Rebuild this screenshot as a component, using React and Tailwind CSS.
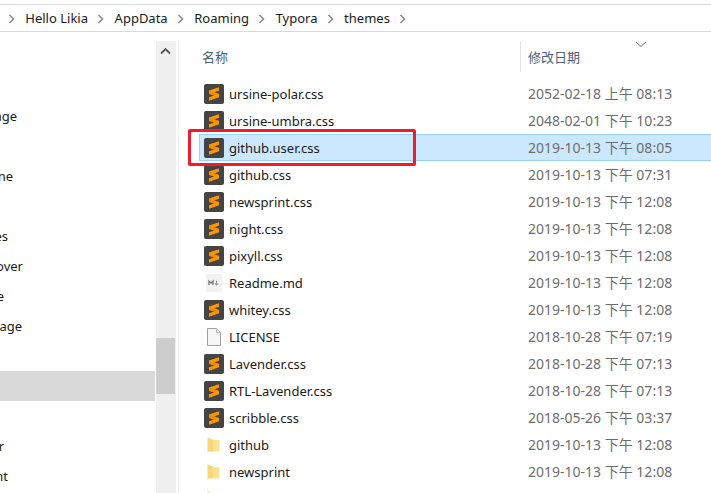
const FONT = "font-['Noto_Sans','Noto_Sans_CJK_SC',sans-serif]"

const files = [
  { name: 'ursine-polar.css', date: '2052-02-18 上午 08:13', icon: 'sublime' },
  { name: 'ursine-umbra.css', date: '2048-02-01 下午 10:23', icon: 'sublime' },
  { name: 'github.user.css', date: '2019-10-13 下午 08:05', icon: 'sublime', selected: true },
  { name: 'github.css', date: '2019-10-13 下午 07:31', icon: 'sublime' },
  { name: 'newsprint.css', date: '2019-10-13 下午 12:08', icon: 'sublime' },
  { name: 'night.css', date: '2019-10-13 下午 12:08', icon: 'sublime' },
  { name: 'pixyll.css', date: '2019-10-13 下午 12:08', icon: 'sublime' },
  { name: 'Readme.md', date: '2019-10-13 下午 12:08', icon: 'md' },
  { name: 'whitey.css', date: '2019-10-13 下午 12:08', icon: 'sublime' },
  { name: 'LICENSE', date: '2018-10-28 下午 07:19', icon: 'file' },
  { name: 'Lavender.css', date: '2018-10-28 下午 07:13', icon: 'sublime' },
  { name: 'RTL-Lavender.css', date: '2018-10-28 下午 07:13', icon: 'sublime' },
  { name: 'scribble.css', date: '2018-05-26 下午 03:37', icon: 'sublime' },
  { name: 'github', date: '2019-10-13 下午 12:08', icon: 'folder' },
  { name: 'newsprint', date: '2019-10-13 下午 12:08', icon: 'folder' },
  { name: '', date: '', icon: 'folder' },
]

// labels are cut off by the left edge of the crop, so they sit right-aligned in a narrow box
const sideRows = [
  { text: 'age', w: 'w-[17px]' },
  { text: '', w: 'w-0' },
  { text: 'ne', w: 'w-[13px]' },
  { text: '', w: 'w-0' },
  { text: 'es', w: 'w-[8px]' },
  { text: 'over', w: 'w-[23px]' },
  { text: 'e', w: 'w-[4px]' },
  { text: 'age', w: 'w-[22px]' },
  { text: '', w: 'w-0' },
  { text: '', w: 'w-0', active: true },
  { text: '', w: 'w-0' },
  { text: 'r', w: 'w-[4px]' },
  { text: 'nt', w: 'w-[8px]' },
]

function SublimeIcon() {
  return (
    <svg width="20" height="20" viewBox="0 0 20 20">
      <rect width="20" height="20" rx="2" fill="#444444" />
      <path d="M15 3.3 L5 6.5 V10 L15 6.8 Z" fill="#ff9800" />
      <path d="M5 6.5 L15 9.8 V13.3 L5 10 Z" fill="#f29000" />
      <path d="M15 9.9 V13.3 L5 16.7 V13.2 Z" fill="#ff9800" />
    </svg>
  )
}

function MdIcon() {
  return (
    <svg width="20" height="20" viewBox="0 0 20 20">
      <rect x="2" y="1" width="16" height="18" fill="#f1f1f1" />
      <path d="M5 12 V8 L7 10 L9 8 V12" fill="none" stroke="#777" strokeWidth="1.3" />
      <path d="M12.5 7.5 V12 M10.8 10.4 L12.5 12 L14.2 10.4" fill="none" stroke="#999" strokeWidth="1.1" />
    </svg>
  )
}

function FileIcon() {
  return (
    <svg width="20" height="20" viewBox="0 0 20 20">
      <path d="M3.5 1.5 H12.5 L16.5 5.5 V18.5 H3.5 Z" fill="#f6f6f6" stroke="#a0a0a0" />
      <path d="M12.5 1.5 V5.5 H16.5" fill="#fff" stroke="#b8b8b8" />
    </svg>
  )
}

function FolderIcon() {
  return (
    <svg width="20" height="20" viewBox="0 0 20 20">
      <path d="M8 5 H15.5 V16.5 H8 Z" fill="#fde38f" />
      <path d="M3.5 2.5 L9 4.5 V16.5 L4.5 16.5 L3.5 18 Z" fill="#f8d67a" />
    </svg>
  )
}

const icons = { sublime: SublimeIcon, md: MdIcon, file: FileIcon, folder: FolderIcon }

function FileRow({ file }) {
  const Icon = icons[file.icon]
  return (
    <div
      className={`flex h-[27px] items-center border pl-[4px] ${
        file.selected ? 'border-[#99d1ff] bg-[#cce8ff]' : 'border-transparent'
      }`}
    >
      <Icon />
      <span className="ml-[5px] w-[299px] shrink-0 pt-[2px] text-[13px] text-[#1a1a1a]">{file.name}</span>
      <span className="text-[14px] text-[#6d6d6d]">{file.date}</span>
    </div>
  )
}

function Crumb({ children }) {
  return (
    <>
      <svg width="8" height="10" viewBox="0 0 8 10" className="shrink-0">
        <path d="M1.5 1 L5.5 5 L1.5 9" fill="none" stroke="#8a8a8a" strokeWidth="1.6" />
      </svg>
      {children && <span>{children}</span>}
    </>
  )
}

export default function App() {
  return (
    <div className={`relative h-[493px] w-[711px] overflow-hidden bg-white ${FONT}`}>
      <div className="mt-[4px] flex h-[28px] items-center gap-[9.3px] border-y border-[#d9d9d9] pl-[8px] pt-[1px] text-[13px] text-[#1a1a1a]">
        <Crumb>Hello Likia</Crumb>
        <Crumb>AppData</Crumb>
        <Crumb>Roaming</Crumb>
        <Crumb>Typora</Crumb>
        <Crumb>themes</Crumb>
        <Crumb />
      </div>

      <div className="flex h-[461px] pt-[9px]">
        <aside className="w-[155px] shrink-0 overflow-hidden pt-[60px] text-[13px] text-[#1a1a1a]">
          {sideRows.map((row, i) => (
            <div key={i} className={`flex h-[30px] items-center pt-[2px] ${row.active ? 'bg-[#d9d9d9]' : ''}`}>
              <div className={`flex justify-end overflow-hidden whitespace-nowrap ${row.w}`}>{row.text}</div>
            </div>
          ))}
        </aside>

        <div className="ml-[1px] flex w-[20px] shrink-0 flex-col bg-[#f0f0f0]">
          <svg width="19" height="14" viewBox="0 0 19 14" className="mt-[3px]">
            <path d="M5 9.5 L9.5 5 L14 9.5" fill="none" stroke="#555" strokeWidth="1.8" />
          </svg>
          <div className="mt-[280px] h-[56px] w-[19px] bg-[#cdcdcd]" />
        </div>

        <div className="ml-[2px] w-[533px] shrink-0 border-l border-[#f0f0f0] pl-[20px]">
          <div className="relative flex h-[31px] items-center text-[13px] text-[#4c607a]">
            <span className="ml-[3px] w-[318px] shrink-0 pt-[2px]">名称</span>
            <span className="border-l border-[#e3e3e3] pl-[7px] pt-[1px] leading-[30px]">修改日期</span>
            <svg width="12" height="7" viewBox="0 0 12 7" className="absolute left-[436px] top-0">
              <path d="M1 1 L6 5.5 L11 1" fill="none" stroke="#6b6b6b" />
            </svg>
          </div>
          <div className="-mr-[10px] pt-[8px]">
            {files.map((file, i) => (
              <FileRow key={i} file={file} />
            ))}
          </div>
        </div>
      </div>

      <div className="absolute left-[188px] top-[129px] h-[37px] w-[228px] rounded-[2px] border-[3px] border-[#ee1c2e]" />
    </div>
  )
}
